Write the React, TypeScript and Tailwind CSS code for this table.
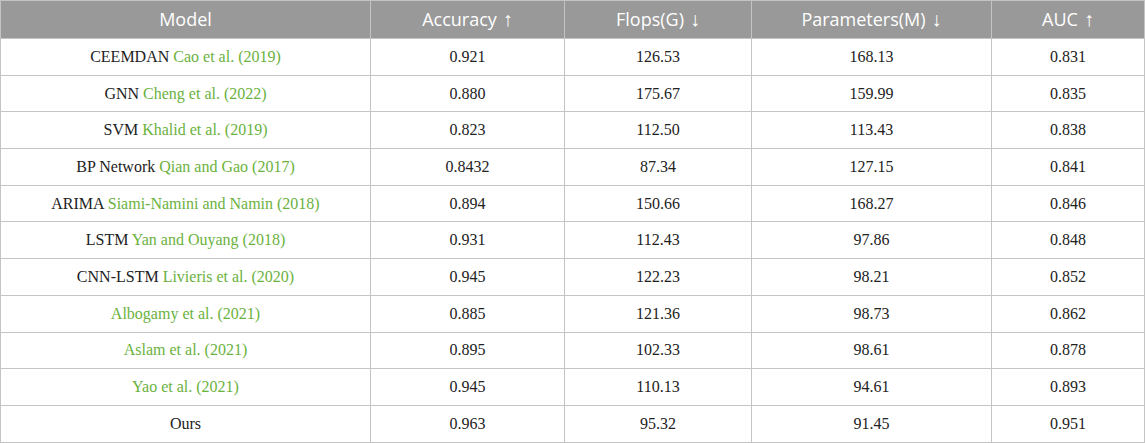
const ROWS: { name: string; cite?: string; acc: string; flops: string; params: string; auc: string }[] = [
  { name: "CEEMDAN", cite: "Cao et al. (2019)", acc: "0.921", flops: "126.53", params: "168.13", auc: "0.831" },
  { name: "GNN", cite: "Cheng et al. (2022)", acc: "0.880", flops: "175.67", params: "159.99", auc: "0.835" },
  { name: "SVM", cite: "Khalid et al. (2019)", acc: "0.823", flops: "112.50", params: "113.43", auc: "0.838" },
  { name: "BP Network", cite: "Qian and Gao (2017)", acc: "0.8432", flops: "87.34", params: "127.15", auc: "0.841" },
  { name: "ARIMA", cite: "Siami-Namini and Namin (2018)", acc: "0.894", flops: "150.66", params: "168.27", auc: "0.846" },
  { name: "LSTM", cite: "Yan and Ouyang (2018)", acc: "0.931", flops: "112.43", params: "97.86", auc: "0.848" },
  { name: "CNN-LSTM", cite: "Livieris et al. (2020)", acc: "0.945", flops: "122.23", params: "98.21", auc: "0.852" },
  { name: "", cite: "Albogamy et al. (2021)", acc: "0.885", flops: "121.36", params: "98.73", auc: "0.862" },
  { name: "", cite: "Aslam et al. (2021)", acc: "0.895", flops: "102.33", params: "98.61", auc: "0.878" },
  { name: "", cite: "Yao et al. (2021)", acc: "0.945", flops: "110.13", params: "94.61", auc: "0.893" },
  { name: "Ours", acc: "0.963", flops: "95.32", params: "91.45", auc: "0.951" },
];

const HEADERS: { label: string; arrow?: string }[] = [
  { label: "Model" },
  { label: "Accuracy", arrow: "↑" },
  { label: "Flops(G)", arrow: "↓" },
  { label: "Parameters(M)", arrow: "↓" },
  { label: "AUC", arrow: "↑" },
];
const WIDTHS = ["w-[370px]", "w-[194px]", "w-[187px]", "w-[240px]", "w-[153px]"];

export default function App() {
  return (
    <div className="w-[1145px] h-[443px] bg-white overflow-hidden">
      <table className="border-collapse table-fixed w-[1145px]">
        <colgroup>
          {WIDTHS.map((w, i) => (
            <col key={i} className={w} />
          ))}
        </colgroup>
        <thead>
          <tr className="h-[38px] bg-[#999999]">
            {HEADERS.map((h) => (
              <th
                key={h.label}
                className="border border-[#c4c4c4] text-center font-normal text-white text-[18px] font-['Open_Sans','Noto_Sans',sans-serif]"
              >
                {h.label}
                {h.arrow ? (
                  <span className="ml-1.5 font-['Liberation_Sans','DejaVu_Sans',sans-serif] text-[20px] font-light leading-none">
                    {h.arrow}
                  </span>
                ) : null}
              </th>
            ))}
          </tr>
        </thead>
        <tbody className="font-['Liberation_Serif',serif] text-[16px] text-[#222222]">
          {ROWS.map((r, i) => (
            <tr key={i} className="h-[36.7px]">
              <td className="border border-[#c4c4c4] text-center">
                {r.name}
                {r.name && r.cite ? " " : null}
                {r.cite ? <span className="text-[#6ab23e]">{r.cite}</span> : null}
              </td>
              <td className="border border-[#c4c4c4] text-center">{r.acc}</td>
              <td className="border border-[#c4c4c4] text-center">{r.flops}</td>
              <td className="border border-[#c4c4c4] text-center">{r.params}</td>
              <td className="border border-[#c4c4c4] text-center">{r.auc}</td>
            </tr>
          ))}
        </tbody>
      </table>
    </div>
  );
}
